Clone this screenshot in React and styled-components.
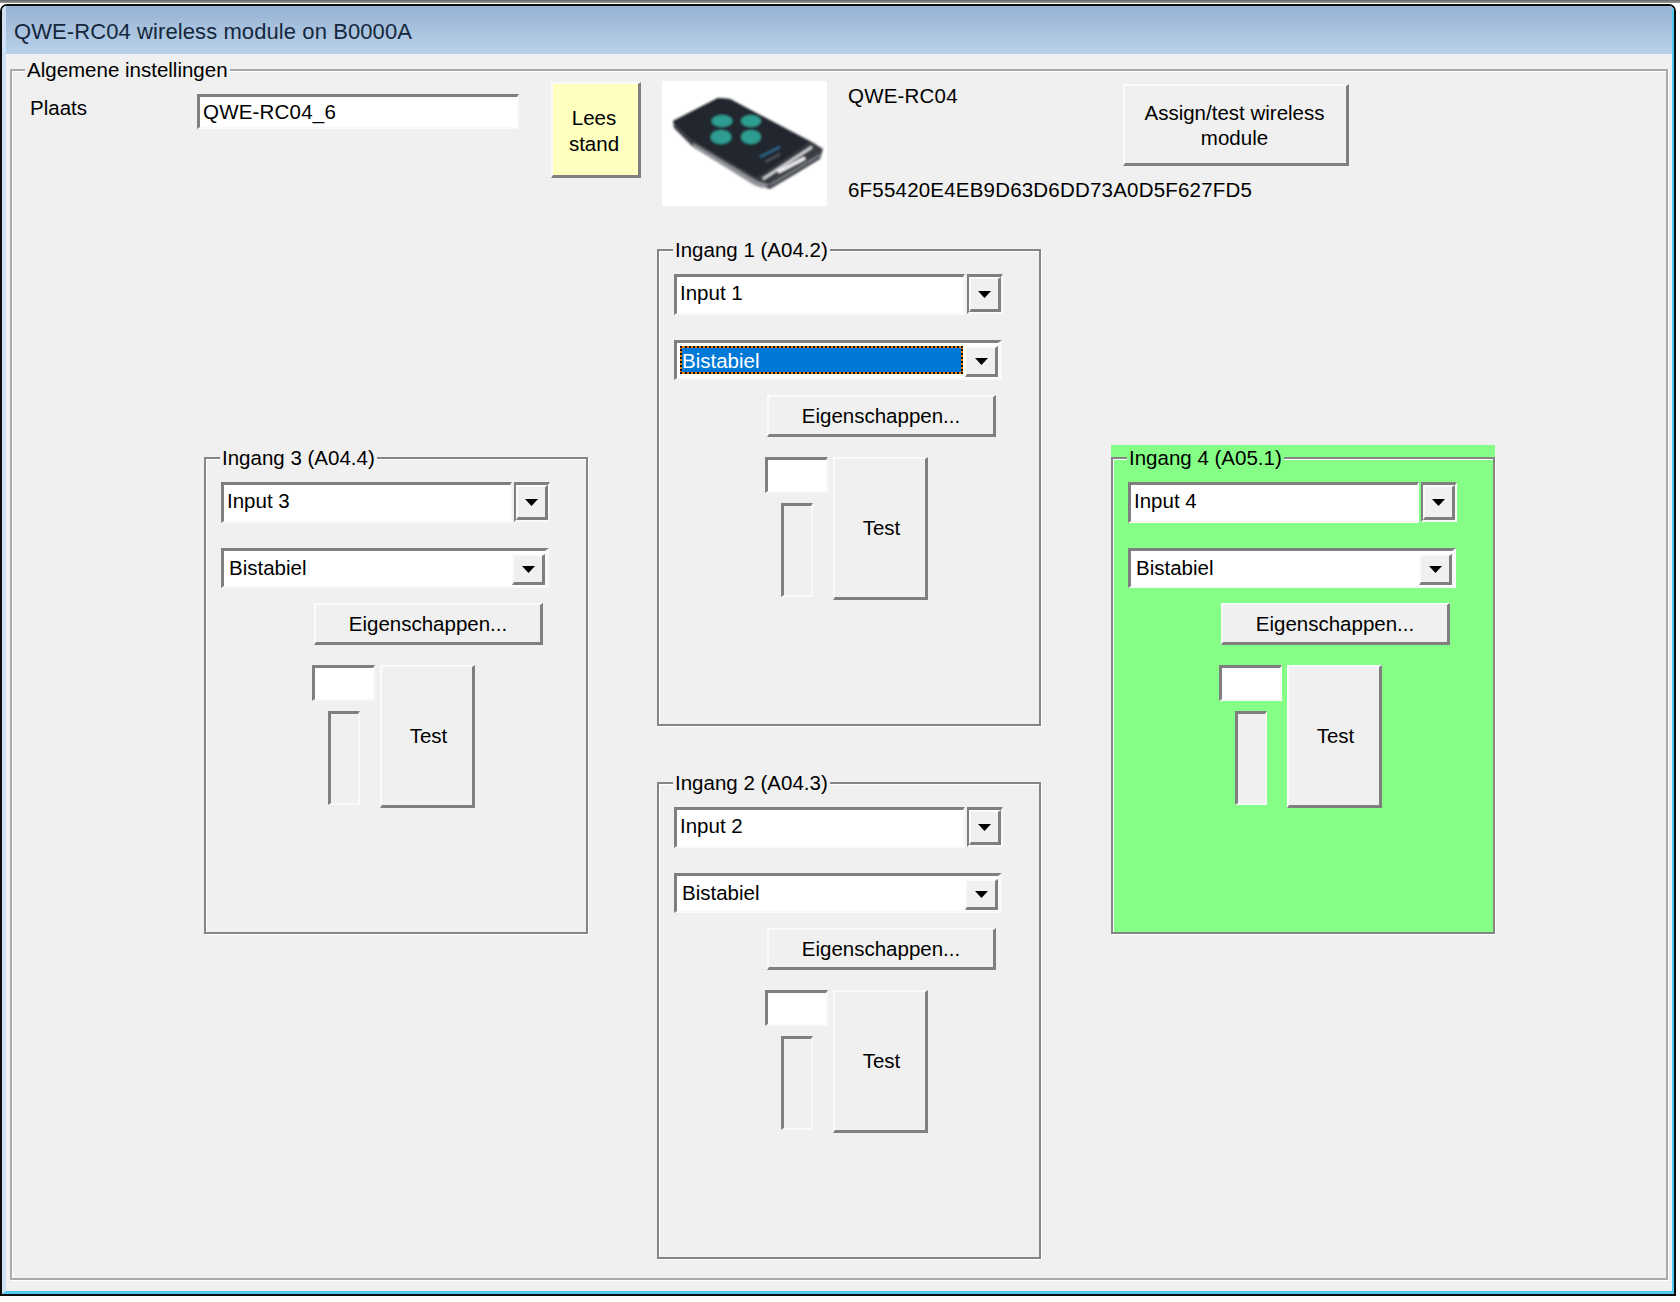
import React from 'react';
import styled, { createGlobalStyle, css } from 'styled-components';

const GlobalStyle = createGlobalStyle`
  html, body {
    margin: 0;
    padding: 0;
    background: #fff;
  }
  body {
    width: 1680px;
    height: 1302px;
    overflow: hidden;
    font-family: 'Liberation Sans', Arial, sans-serif;
    font-size: 20.5px;
    color: #000;
  }
`;

const sunken = css`
  border-style: solid;
  border-width: 3px 2px 2px 3px;
  border-color: #7f7f7f #f9f9f9 #f9f9f9 #7f7f7f;
`;

const raised = css`
  border-style: solid;
  border-width: 2px 3px 3px 2px;
  border-color: #fbfbfb #7f7f7f #7f7f7f #fbfbfb;
  background: #f0f0f0;
`;

const TopStrip = styled.div`
  height: 3px;
  background: linear-gradient(#666, #999);
  border-bottom: 1px solid #fff;
`;

const Window = styled.div`
  box-sizing: border-box;
  width: 1676px;
  height: 1292px;
  border: 2px solid #0c0c0c;
  border-radius: 7px 7px 0 0;
  overflow: hidden;
`;

const WindowInner = styled.div`
  box-sizing: border-box;
  height: 100%;
  display: flex;
  flex-direction: column;
  background: #f0f0f0;
  border-left: 4px solid #cfdff4;
  border-right: 2px solid #4fc9ef;
  border-bottom: 3px solid #4fc9ef;
`;

const TitleBar = styled.div`
  box-sizing: border-box;
  height: 48px;
  flex: none;
  display: flex;
  align-items: center;
  padding: 3px 0 0 8px;
  background: linear-gradient(#97b3d3, #b9d1ea);
  font-size: 22px;
  letter-spacing: 0.09px;
  color: #14273c;
`;

const Frame = styled.div`
  position: relative;
  box-sizing: border-box;
  border: 2px solid #9c9c9c;
  box-shadow: inset 1px 1px 0 #fff, 1px 1px 0 #fff;
`;

const MainFrame = styled(Frame)`
  flex: 1;
  margin: 15px 4px 11px;
  border-color: #aaa;
`;

const Legend = styled.div`
  position: absolute;
  top: -13px;
  left: ${p => p.$left || 14}px;
  padding: 0 2px;
  line-height: 24px;
  white-space: nowrap;
  background: ${p => (p.$active ? '#86ff86' : '#f0f0f0')};
`;

const TopRow = styled.div`
  display: flex;
  align-items: flex-start;
  padding-top: 10px;
`;

const PlaceLabel = styled.div`
  width: 167px;
  margin: 15px 0 0 18px;
  line-height: 24px;
`;

const PlaceEdit = styled.div`
  ${sunken};
  box-sizing: border-box;
  width: 322px;
  height: 35px;
  margin-top: 13px;
  padding-left: 3px;
  background: #fff;
  line-height: 30px;
  letter-spacing: 0.2px;
`;

const ReadButton = styled.div`
  ${raised};
  box-sizing: border-box;
  width: 90px;
  height: 96px;
  margin: 1px 0 0 32px;
  padding: 2px 3px 0 0;
  display: flex;
  align-items: center;
  justify-content: center;
  text-align: center;
  line-height: 25.5px;
  background: #ffffc0;
`;

const Photo = styled.svg`
  display: block;
  flex: none;
  width: 165px;
  height: 125px;
  margin-left: 21px;
  background: #fff;
`;

const InfoColumn = styled.div`
  width: 275px;
  height: 118px;
  margin: 3px 0 0 21px;
  display: flex;
  flex-direction: column;
  justify-content: space-between;
  line-height: 24px;
  letter-spacing: 0.2px;
`;

const AssignButton = styled.div`
  ${raised};
  box-sizing: border-box;
  width: 226px;
  height: 82px;
  padding-right: 2px;
  display: flex;
  margin-top: 3px;
  align-items: center;
  justify-content: center;
  text-align: center;
  line-height: 25px;
`;

const GroupGrid = styled.div`
  display: grid;
  grid-template-columns: 384px 385px 384px;
  column-gap: 69px;
  padding: 43px 0 0 192px;
`;

const SideColumn = styled.div`
  padding-top: 196px;
`;

const CenterColumn = styled.div`
  display: flex;
  flex-direction: column;
  gap: 56px;
`;

const GroupShell = styled.div`
  width: 384px;
  padding-top: ${p => (p.$side ? 12 : 0)}px;
  background: ${p => (p.$active ? '#86ff86' : 'transparent')};
`;

const GroupFrame = styled(Frame)`
  height: 477px;
  padding: 23px 0 0 15px;
  border-color: #858585;
`;

const ComboRow = styled.div`
  display: flex;
  gap: 2px;
  height: 41px;
`;

const ComboEdit = styled.div`
  ${sunken};
  box-sizing: border-box;
  width: 291px;
  padding-left: 3px;
  background: #fff;
  line-height: 32px;
`;

const ComboArrowOuter = styled.div`
  ${sunken};
  border-left-width: 2px;
  box-sizing: border-box;
  width: 36px;
  height: 40px;
  display: flex;
`;

const ArrowButton = styled.div`
  ${raised};
  box-sizing: border-box;
  flex: 1;
  display: flex;
  align-items: center;
  justify-content: center;
`;

const Arrow = () => (
  <svg width="13" height="7" viewBox="0 0 13 7">
    <polygon points="0,0 13,0 6.5,7" fill="#000" />
  </svg>
);

const SelectBox = styled.div`
  ${sunken};
  border-right-width: 4px;
  box-sizing: border-box;
  width: 328px;
  height: 40px;
  margin-top: 25px;
  display: flex;
  background: #fff;
`;

const SelectValue = styled.div`
  box-sizing: border-box;
  width: 283px;
  height: 28px;
  margin: 3px 2px 0 3px;
  line-height: 28px;
  ${p =>
    p.$focused
      ? css`
          border: 2px dotted #111;
          background: linear-gradient(#0078d7, #0078d7) padding-box, linear-gradient(#f08000, #f08000) border-box;
          color: #fff;
          line-height: 25px;
        `
      : css`
          padding-left: 2px;
        `}
`;

const SelectArrow = styled(ArrowButton)`
  flex: none;
  width: 33px;
  height: 31px;
  margin-top: 3px;
`;

const PropsButton = styled.div`
  ${raised};
  box-sizing: border-box;
  width: 229px;
  height: 42px;
  margin: 15px 0 0 93px;
  display: flex;
  align-items: center;
  justify-content: center;
`;

const TestRow = styled.div`
  display: flex;
  gap: 5px;
  margin: 20px 0 0 91px;
`;

const IndicatorColumn = styled.div`
  width: 63px;
  display: flex;
  flex-direction: column;
  align-items: center;
  gap: 10px;
`;

const ValueBox = styled.div`
  ${sunken};
  box-sizing: border-box;
  width: 63px;
  height: 36px;
  background: #fff;
`;

const LevelBar = styled.div`
  ${sunken};
  box-sizing: border-box;
  width: 32px;
  height: 94px;
  background: #f0f0f0;
`;

const TestButton = styled.div`
  ${raised};
  box-sizing: border-box;
  width: 95px;
  height: 143px;
  padding-left: 3px;
  display: flex;
  align-items: center;
  justify-content: center;
`;

const RemotePhoto = () => (
  <Photo viewBox="0 0 165 125">
    <defs>
      <filter id="soft">
        <feGaussianBlur stdDeviation="0.9" />
      </filter>
    </defs>
    <g filter="url(#soft)">
      <polygon points="56,17 11,40 12,47 31,66 95,104 108,108 135,92 158,78 161,68 150,61 68,18" fill="#3b3e44" />
      <polygon points="31,62 95,100 108,104 100,107 92,104 31,66" fill="#8f9297" />
      <polygon points="56,17 11,40 30,59 95,97 148,61 68,18" fill="#23282f" />
      <line x1="101" y1="98" x2="150" y2="66" stroke="#dfe1e3" strokeWidth="2.2" />
      <line x1="116" y1="91" x2="143" y2="77" stroke="#f4f4f4" strokeWidth="3.2" />
      <line x1="108" y1="104" x2="158" y2="74" stroke="#85888e" strokeWidth="1.6" />
      <ellipse cx="60" cy="40" rx="10.5" ry="6" fill="#2f9d92" />
      <ellipse cx="89" cy="40" rx="10" ry="6" fill="#2f9d92" />
      <ellipse cx="59" cy="56" rx="10.5" ry="7" fill="#2f9d92" />
      <ellipse cx="89" cy="56" rx="10" ry="7" fill="#2f9d92" />
      <line x1="98" y1="76" x2="118" y2="66" stroke="#2a6a8c" strokeWidth="2" />
      <line x1="103" y1="81" x2="118" y2="73" stroke="#5b6068" strokeWidth="1.5" />
    </g>
  </Photo>
);

const InputGroup = ({ number, address, inputName, active, side, focused }) => (
  <GroupShell $active={active} $side={side}>
    <GroupFrame>
      <Legend $active={active}>
        Ingang {number} ({address})
      </Legend>
      <ComboRow>
        <ComboEdit>{inputName}</ComboEdit>
        <ComboArrowOuter>
          <ArrowButton>
            <Arrow />
          </ArrowButton>
        </ComboArrowOuter>
      </ComboRow>
      <SelectBox>
        <SelectValue $focused={focused}>Bistabiel</SelectValue>
        <SelectArrow>
          <Arrow />
        </SelectArrow>
      </SelectBox>
      <PropsButton>Eigenschappen...</PropsButton>
      <TestRow>
        <IndicatorColumn>
          <ValueBox />
          <LevelBar />
        </IndicatorColumn>
        <TestButton>Test</TestButton>
      </TestRow>
    </GroupFrame>
  </GroupShell>
);

const App = () => (
  <>
    <GlobalStyle />
    <TopStrip />
    <Window>
      <WindowInner>
        <TitleBar>QWE-RC04 wireless module on B0000A</TitleBar>
        <MainFrame>
          <Legend $left={13}>Algemene instellingen</Legend>
          <TopRow>
            <PlaceLabel>Plaats</PlaceLabel>
            <PlaceEdit>QWE-RC04_6</PlaceEdit>
            <ReadButton>
              Lees
              <br />
              stand
            </ReadButton>
            <RemotePhoto />
            <InfoColumn>
              <div>QWE-RC04</div>
              <div>6F55420E4EB9D63D6DD73A0D5F627FD5</div>
            </InfoColumn>
            <AssignButton>
              Assign/test wireless
              <br />
              module
            </AssignButton>
          </TopRow>
          <GroupGrid>
            <SideColumn>
              <InputGroup side number={3} address="A04.4" inputName="Input 3" />
            </SideColumn>
            <CenterColumn>
              <InputGroup focused number={1} address="A04.2" inputName="Input 1" />
              <InputGroup number={2} address="A04.3" inputName="Input 2" />
            </CenterColumn>
            <SideColumn>
              <InputGroup side active number={4} address="A05.1" inputName="Input 4" />
            </SideColumn>
          </GroupGrid>
        </MainFrame>
      </WindowInner>
    </Window>
  </>
);

export default App;
